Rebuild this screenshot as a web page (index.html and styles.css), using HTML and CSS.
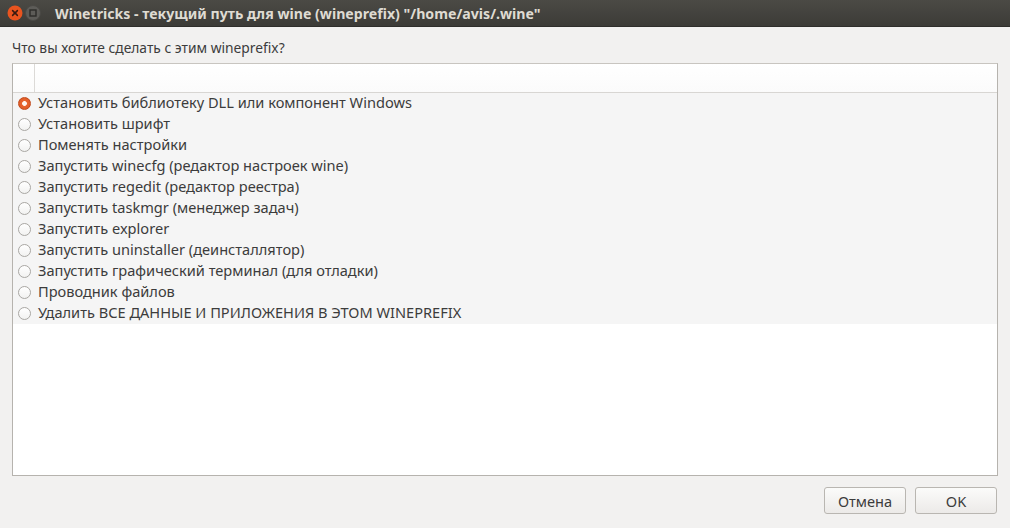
FILE: index.html
```html
<!DOCTYPE html>
<html lang="ru">
<head>
<meta charset="utf-8">
<link rel="stylesheet" href="styles.css">
</head>
<body>
<div class="window">
  <div class="titlebar">
    <div class="wbtns">
      <span class="wbtn close"><svg width="16" height="16" viewBox="0 0 16 16"><circle cx="8" cy="8" r="7.5" fill="#e9541f"/><path d="M5.6 5.6 L10.4 10.4 M10.4 5.6 L5.6 10.4" stroke="#3a1a10" stroke-width="1.5" stroke-linecap="round"/></svg></span>
      <span class="wbtn max"><svg width="16" height="16" viewBox="0 0 16 16"><circle cx="8" cy="8" r="7.5" fill="#5d5c58" stroke="#4a4945" stroke-width="1"/><rect x="5" y="5" width="6" height="6" fill="none" stroke="#2d2c29" stroke-width="1.4"/></svg></span>
    </div>
    <div class="title">Winetricks - текущий путь для wine (wineprefix) "/home/avis/.wine"</div>
  </div>
  <div class="content">
    <div class="prompt">Что вы хотите сделать с этим wineprefix?</div>
    <div class="listbox">
      <div class="header">
        <div class="hcol first"></div>
        <div class="hcol rest"></div>
      </div>
      <div class="rows">
        <div class="row"><span class="radio on"></span><span class="label">Установить библиотеку DLL или компонент Windows</span></div>
        <div class="row"><span class="radio"></span><span class="label">Установить шрифт</span></div>
        <div class="row"><span class="radio"></span><span class="label">Поменять настройки</span></div>
        <div class="row"><span class="radio"></span><span class="label">Запустить winecfg (редактор настроек wine)</span></div>
        <div class="row"><span class="radio"></span><span class="label">Запустить regedit (редактор реестра)</span></div>
        <div class="row"><span class="radio"></span><span class="label">Запустить taskmgr (менеджер задач)</span></div>
        <div class="row"><span class="radio"></span><span class="label">Запустить explorer</span></div>
        <div class="row"><span class="radio"></span><span class="label">Запустить uninstaller (деинсталлятор)</span></div>
        <div class="row"><span class="radio"></span><span class="label">Запустить графический терминал (для отладки)</span></div>
        <div class="row"><span class="radio"></span><span class="label">Проводник файлов</span></div>
        <div class="row"><span class="radio"></span><span class="label">Удалить ВСЕ ДАННЫЕ И ПРИЛОЖЕНИЯ В ЭТОМ WINEPREFIX</span></div>
      </div>
    </div>
    <div class="buttons">
      <button class="btn">Отмена</button>
      <button class="btn">OK</button>
    </div>
  </div>
</div>
</body>
</html>
```
FILE: styles.css
```css
html, body {
  margin: 0;
  padding: 0;
  width: 1010px;
  height: 528px;
  overflow: hidden;
  background: #f2f1f0;
  font-family: "Noto Sans", "DejaVu Sans", sans-serif;
}
.window {
  display: flex;
  flex-direction: column;
  height: 528px;
}
.titlebar {
  height: 27px;
  flex: none;
  background: linear-gradient(#4b4a45, #3c3b37);
  display: flex;
  align-items: center;
  box-sizing: border-box;
  border-bottom: 1px solid #2f2e2b;
}
.wbtns {
  display: flex;
  gap: 2px;
  padding-left: 7px;
  width: 48px;
}
.wbtn {
  width: 16px;
  height: 16px;
  display: block;
}
.wbtn svg { display: block; }
.title {
  color: #dfdbd2;
  font-weight: bold;
  font-size: 14.15px;
}
.content {
  flex: 1;
  display: flex;
  flex-direction: column;
  padding: 12px 12px 14px 12px;
}
.prompt {
  font-size: 13.8px;
  color: #3c3c3c;
  line-height: 18px;
  margin-bottom: 6px;
}
.listbox {
  height: 413px;
  border: 1px solid #b6b3ae;
  border-top-color: #c8c5c0;
  background: #ffffff;
  box-sizing: border-box;
  display: flex;
  flex-direction: column;
}
.header {
  height: 28px;
  display: flex;
  flex: none;
  border-bottom: 1px solid #d8d6d3;
  background: linear-gradient(#ffffff, #fbfbfb);
}
.hcol.first {
  width: 21px;
  flex: none;
  border-right: 1px solid #dcdad7;
}
.hcol.rest { flex: 1; }
.row {
  height: 21px;
  display: flex;
  align-items: center;
  background: #f5f5f5;
  font-size: 14.6px;
  color: #3c3c3c;
  padding-left: 5px;
}
.label {
  line-height: 19px;
  padding-bottom: 2px;
}
.radio {
  width: 13px;
  height: 13px;
  border-radius: 50%;
  border: 1px solid #a9a7a3;
  background: linear-gradient(#ffffff, #f2f2f1);
  margin-right: 7px;
  flex: none;
  box-sizing: border-box;
}
.radio.on {
  border-color: #c24a1c;
  background: radial-gradient(circle, #fff6f0 0 2px, #e8642f 2.8px, #d9561f 100%);
}
.buttons {
  display: flex;
  justify-content: flex-end;
  gap: 9px;
  margin-top: 11px;
  padding-right: 1px;
}
.btn {
  width: 82px;
  height: 27px;
  border: 1px solid #b9b6b1;
  border-radius: 3px;
  background: linear-gradient(#fbfbfa, #eceae8);
  font-family: "Noto Sans", "DejaVu Sans", sans-serif;
  font-size: 14.6px;
  color: #3c3c3c;
  padding: 0;
}
```
